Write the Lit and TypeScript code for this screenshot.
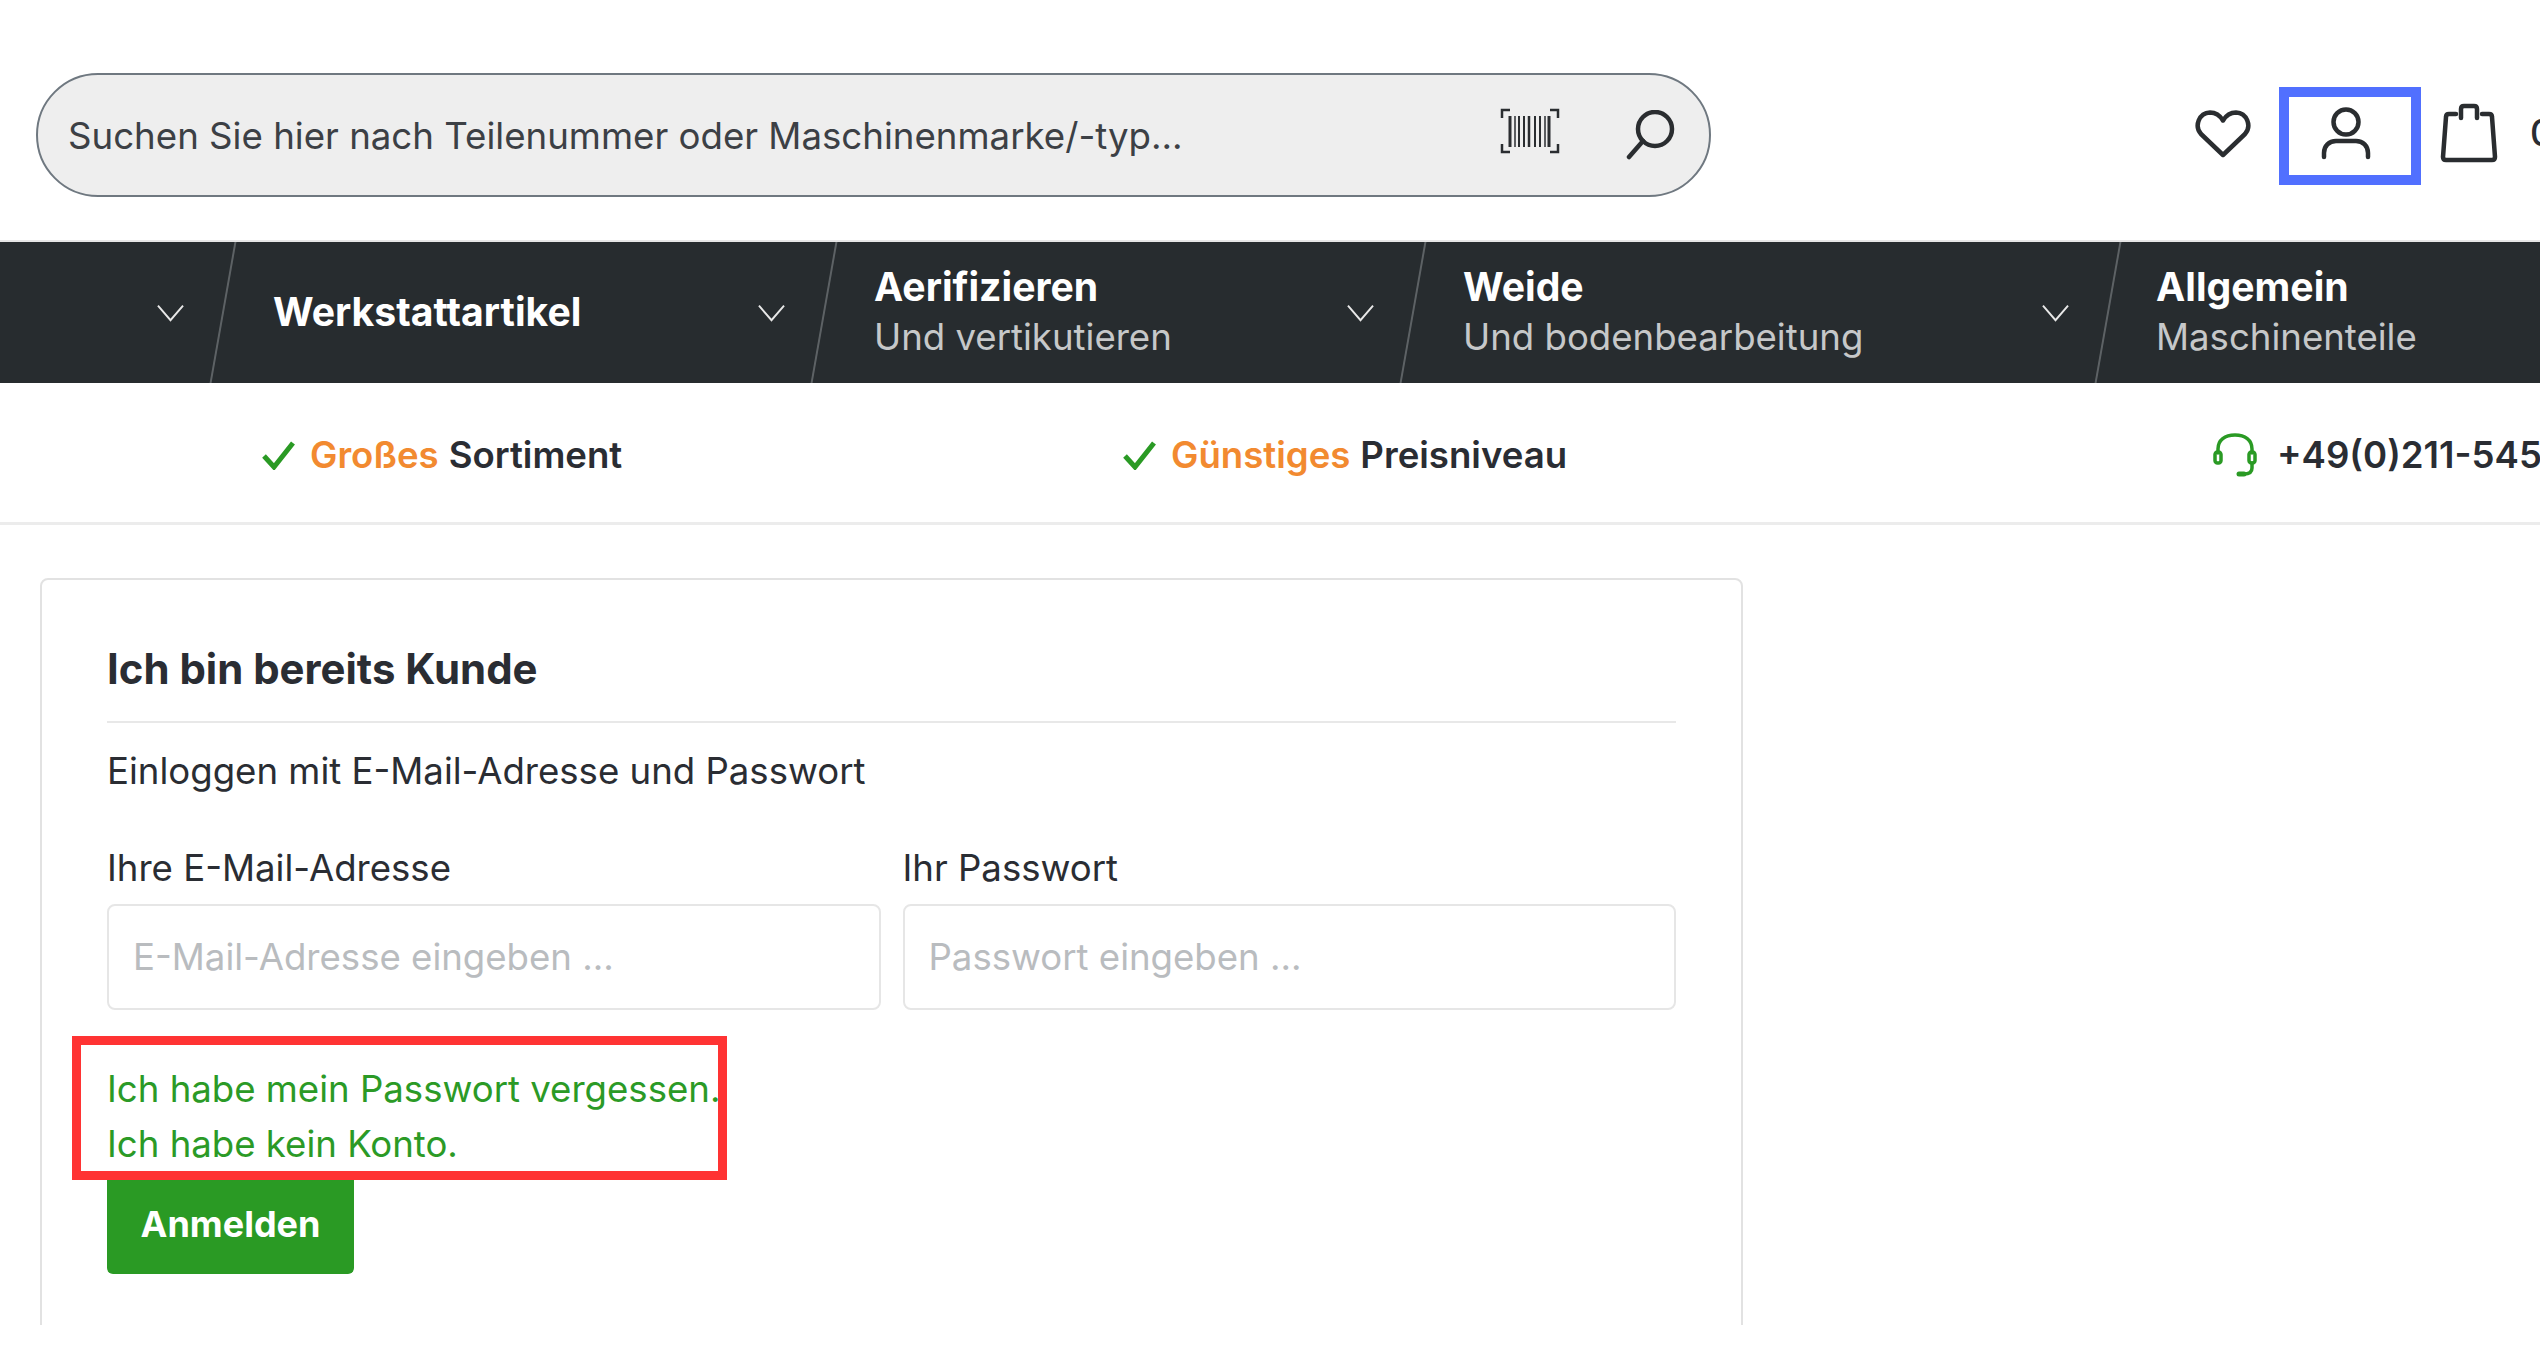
import { LitElement, html, css, svg } from "lit";
import { customElement } from "lit/decorators.js";

const chevron = html`<svg class="chev" viewBox="0 0 28 28" fill="none" stroke="#e8e8e8" stroke-width="2"><path d="M1 8l13 15L27 8"/></svg>`;

@customElement("app-root")
export class AppRoot extends LitElement {
  static styles = css`
    :host { display: block; width: 2540px; height: 1360px; overflow: hidden; background: #fff; font-family: Inter, "Liberation Sans", sans-serif; color: #2a2d33; }
    .page { height: 1325px; overflow: hidden; }
    .head { height: 240px; display: flex; align-items: flex-start; }
    .search { flex: none; margin: 73px 0 0 36px; width: 1675px; height: 124px; box-sizing: border-box; border: 2px solid #6f7880; border-radius: 62px; background: #eeeeee; display: flex; align-items: center; padding: 0 33px 0 30px; }
    .ph { flex: 1; font-size: 36.65px; color: #3c4045; white-space: nowrap; }
    .barcode { flex: none; width: 60px; height: 46px; margin: 0 66px 9px 0; }
    .mag { flex: none; width: 50px; height: 50px; }
    .tools { display: flex; align-items: flex-start; margin-top: 87px; }
    .tool { flex: none; }
    .heart { width: 56px; height: 48px; margin: 23px 0 0 484px; }
    .userbox { width: 142px; height: 98px; box-sizing: border-box; border: 10px solid #5170ff; margin-left: 28px; display: flex; justify-content: center; }
    .user { flex: none; width: 52px; height: 56px; margin: 8px 8px 0 0; }
    .bag { width: 58px; height: 60px; margin: 16px 0 0 19px; }
    .cart { font-size: 36.6px; font-weight: 500; margin: 24px 0 0 32px; white-space: nowrap; }
    nav { height: 143px; background: #272c2f; display: flex; color: #fff; border-top: 2px solid #e6e6e6; box-sizing: border-box; }
    .item { flex: none; box-sizing: border-box; height: 100%; display: flex; align-items: center; justify-content: space-between; padding: 0 39px 2px 50px; position: relative; }
    .item::before { content: ""; position: absolute; left: -1px; top: 0; bottom: 0; width: 2px; background: #5d6265; transform: skewX(-10deg); }
    .item:first-child::before { display: none; }
    .i0 { width: 223px; padding-left: 0; justify-content: flex-end; }
    .i1 { width: 601px; }
    .i2 { width: 589px; }
    .i3 { width: 695px; }
    .i4 { flex: 1; min-width: 0; white-space: nowrap; padding-left: 48px; }
    .chev { width: 27px; height: 27px; flex: none; }
    .t1 { font-size: 39.2px; font-weight: 700; line-height: 50px; white-space: nowrap; }
    .t2 { font-size: 36.6px; color: #c6c8c9; line-height: 50px; white-space: nowrap; }
    .trust { height: 142px; box-sizing: border-box; border-bottom: 3px solid #ececec; display: flex; align-items: center; font-size: 36.6px; font-weight: 600; white-space: nowrap; padding: 4px 0 0 262px; }
    .tr { display: flex; align-items: center; flex: none; }
    .tr svg { flex: none; }
    .check { width: 33px; height: 30px; margin-right: 15px; }
    .o { color: #f28a30; margin-right: 10px; }
    .tw1 { width: 861px; }
    .tw2 { width: 1090px; }
    .hs { width: 44px; height: 44px; margin-right: 20px; }
    .card { margin: 53px 0 0 40px; width: 1703px; height: 900px; box-sizing: border-box; border: 2px solid #e2e2e2; border-radius: 8px; padding: 64px 65px 0 65px; }
    h2 { margin: 0; font-size: 41.9px; font-weight: 700; line-height: 50px; padding-bottom: 27px; border-bottom: 2px solid #e8e8e8; color: #2a2d33; }
    .sub { font-size: 36.6px; line-height: 50px; margin-top: 23px; }
    .fields { display: grid; grid-template-columns: 1fr 1fr; column-gap: 22px; margin-top: 47px; }
    label { display: block; font-size: 36.6px; line-height: 50px; margin-bottom: 11px; }
    .input { height: 106px; box-sizing: border-box; border: 2px solid #e6e6e6; border-radius: 8px; display: flex; align-items: center; padding: 0 24px; font-size: 36.6px; color: #b9bcbf; white-space: nowrap; }
    .links { position: relative; z-index: 1; margin-top: 52px; font-size: 36.6px; line-height: 55px; color: #2b9a26; }
    .links div { white-space: nowrap; }
    .mark { position: absolute; left: -35px; top: -26px; width: 655px; height: 144px; box-sizing: border-box; border: 9px solid #ff3333; }
    button { display: block; margin-top: 2px; width: 247px; height: 100px; border: 0; border-radius: 6px; background: #2a9a24; color: #fff; font: 700 36px Inter, "Liberation Sans", sans-serif; padding: 0; }
  `;

  render() {
    const bars: [number, number][] = [[10, 3], [15, 1.5], [19, 2], [24, 2], [29, 2.5], [35, 2], [40, 2], [45, 1.5], [49, 3]];
    return html`<div class="page">
      <div class="head">
        <div class="search">
          <div class="ph">Suchen Sie hier nach Teilenummer oder Maschinenmarke/-typ...</div>
          <svg class="barcode" viewBox="0 0 60 46" fill="none" stroke="#2a2d30">
            <path stroke-width="2.5" d="M10 2H2v8M50 2h8v8M10 44H2v-8M50 44h8v-8"/>
            ${bars.map(([x, w]) => svg`<path stroke-width="${w}" d="M${x} 8v31"/>`)}
          </svg>
          <svg class="mag" viewBox="0 0 50 50" fill="none" stroke="#2a2d30" stroke-width="4.5" stroke-linecap="round"><circle cx="29" cy="19" r="17"/><path d="M17 31L3 47"/></svg>
        </div>
        <div class="tools">
          <svg class="tool heart" viewBox="0 0 56 48" fill="none" stroke="#2a2d30" stroke-width="4.5" stroke-linejoin="round"><path d="M28 45L6 24C-1 16 4 3 15 2.500c6 0 10 3 13 8 3-5 7-8 13-8 11 .5 16 13.500 9 21.500z"/></svg>
          <div class="userbox tool">
            <svg class="user" viewBox="0 0 52 56" fill="none" stroke="#2a2d30" stroke-width="4.5" stroke-linecap="round"><circle cx="26" cy="17" r="12.500"/><path d="M4 52v-4c0-7 5-12 12-12h20c7 0 12 5 12 12v4"/></svg>
          </div>
          <svg class="tool bag" viewBox="0 0 58 60" fill="none" stroke="#2a2d30" stroke-width="4.500" stroke-linejoin="round" stroke-linecap="round"><path d="M16 11H9c-2 0-3 1-3 3L3 54c0 2 1 3 3 3h46c2 0 3-1 3-3L52 14c0-2-1-3-3-3h-7"/><path d="M21 15V6c0-2 1-3 3-3h10c2 0 3 1 3 3v9"/></svg>
          <div class="cart tool">0,00 €</div>
        </div>
      </div>
      <nav>
        <div class="item i0">${chevron}</div>
        <div class="item i1"><div class="t1">Werkstattartikel</div>${chevron}</div>
        <div class="item i2"><div><div class="t1">Aerifizieren</div><div class="t2">Und vertikutieren</div></div>${chevron}</div>
        <div class="item i3"><div><div class="t1">Weide</div><div class="t2">Und bodenbearbeitung</div></div>${chevron}</div>
        <div class="item i4"><div><div class="t1">Allgemein</div><div class="t2">Maschinenteile</div></div></div>
      </nav>
      <div class="trust">
        <div class="tr tw1">
          <svg class="check" viewBox="0 0 33 30" fill="none" stroke="#2a9a24" stroke-width="5"><path d="M2 16l10 11L31 3"/></svg>
          <span class="o">Großes</span>Sortiment
        </div>
        <div class="tr tw2">
          <svg class="check" viewBox="0 0 33 30" fill="none" stroke="#2a9a24" stroke-width="5"><path d="M2 16l10 11L31 3"/></svg>
          <span class="o">Günstiges</span>Preisniveau
        </div>
        <div class="tr">
          <svg class="hs" viewBox="0 0 44 44" fill="none" stroke="#2a9a24" stroke-width="3.500" stroke-linecap="round"><path d="M5 20v-4C5 7 12 2 22 2s17 5 17 14v4"/><rect x="2" y="19" width="6" height="11" rx="2.500"/><rect x="36" y="19" width="6" height="11" rx="2.500"/><path d="M39 30v5c0 4-3 6-8 6"/><path stroke-width="5" d="M26 41h5"/></svg>
          +49(0)211-54577
        </div>
      </div>
      <div class="card">
        <h2>Ich bin bereits Kunde</h2>
        <div class="sub">Einloggen mit E-Mail-Adresse und Passwort</div>
        <div class="fields">
          <div><label>Ihre E-Mail-Adresse</label><div class="input">E-Mail-Adresse eingeben ...</div></div>
          <div><label>Ihr Passwort</label><div class="input">Passwort eingeben ...</div></div>
        </div>
        <div class="links">
          <div>Ich habe mein Passwort vergessen.</div>
          <div>Ich habe kein Konto.</div>
          <div class="mark"></div>
        </div>
        <button>Anmelden</button>
      </div>
    </div>`;
  }
}
